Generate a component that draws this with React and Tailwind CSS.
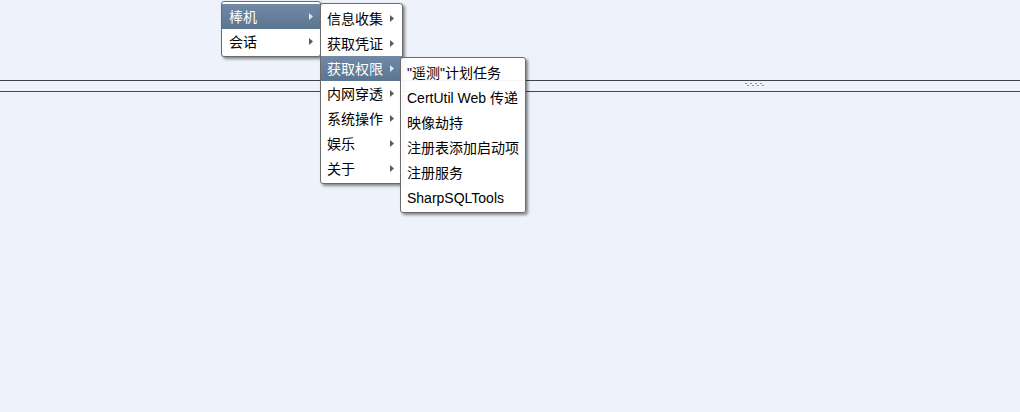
import React from 'react';

const font = { fontFamily: '"Liberation Sans", "Noto Sans CJK SC", sans-serif' };

function Arrow({ active }) {
    return (
        <svg width="4" height="7" viewBox="0 0 4 7" className="shrink-0">
            <path d="M0 0 L4 3.5 L0 7 Z" fill={active ? '#dfe6ee' : '#5a5a5a'} />
        </svg>
    );
}

function Item({ label, active, arrow, pl, pr }) {
    return (
        <div
            className={`h-[25px] flex items-center justify-between whitespace-nowrap text-[14px] leading-none ${pl} ${pr} ${active ? 'bg-gradient-to-b from-[#7189a4] to-[#5c7591] text-white' : 'text-black'}`}
        >
            <span>{label}</span>
            {arrow && <Arrow active={active} />}
        </div>
    );
}

function Menu({ items, className, pl = 'pl-[7px]', pr = 'pr-[7px]' }) {
    return (
        <div className={`absolute bg-white border border-[#6b6b6b] rounded-[3px] py-[2px] shadow-[2px_2px_3px_rgba(0,0,0,0.45)] ${className}`}>
            {items.map(it => (
                <Item key={it.label} {...it} pl={pl} pr={pr} />
            ))}
        </div>
    );
}

export default function App() {
    return (
        <div className="relative w-[1020px] h-[412px] bg-[#eef2fa] overflow-hidden" style={font}>
            {/* split panes */}
            <div className="h-[80px]" />
            <div className="h-[12px] border-t border-t-[#3e4349] border-b border-b-[#394b5e] flex items-start">
                <svg width="20" height="4" viewBox="0 0 20 4" className="ml-[745px] mt-[2px]">
                    {[0, 5, 10, 15].map(x => (
                        <rect key={x} x={x} y="0" width="2" height="1" fill="#8a96a8" />
                    ))}
                    {[2, 7, 12, 17].map(x => (
                        <rect key={x} x={x} y="2" width="2" height="1" fill="#8a96a8" />
                    ))}
                </svg>
            </div>
            <div className="flex-1" />

            {/* cascading context menu */}
            <Menu
                className="left-[221px] top-[1px] w-[100px]"
                items={[
                    { label: '棒机', active: true, arrow: true },
                    { label: '会话', arrow: true },
                ]}
            />
            <Menu
                className="left-[320px] top-[3px] w-[83px]"
                pl="pl-[6px]"
                pr="pr-[8px]"
                items={[
                    { label: '信息收集', arrow: true },
                    { label: '获取凭证', arrow: true },
                    { label: '获取权限', active: true, arrow: true },
                    { label: '内网穿透', arrow: true },
                    { label: '系统操作', arrow: true },
                    { label: '娱乐', arrow: true },
                    { label: '关于', arrow: true },
                ]}
            />
            <Menu
                className="left-[400px] top-[57px] w-[126px] bg-white/95"
                pl="pl-[6px]"
                pr="pr-[4px]"
                items={[
                    { label: '"遥测"计划任务' },
                    { label: 'CertUtil Web 传递' },
                    { label: '映像劫持' },
                    { label: '注册表添加启动项' },
                    { label: '注册服务' },
                    { label: 'SharpSQLTools' },
                ]}
            />
        </div>
    );
}
